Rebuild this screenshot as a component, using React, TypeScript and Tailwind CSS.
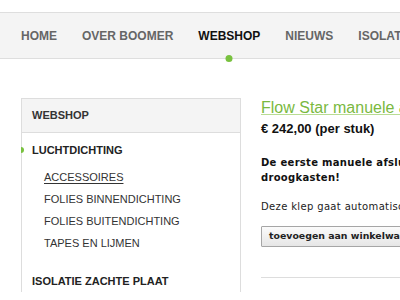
import React from "react";

const navItems = ["HOME", "OVER BOOMER", "WEBSHOP", "NIEUWS", "ISOLATIE", "CONTACT"];

export default function App() {
  return (
    <div className="w-[400px] h-[300px] overflow-hidden bg-white relative" style={{ fontFamily: '"Liberation Sans", Arial, sans-serif' }}>
      <div className="h-[12px]" />
      <nav className="h-[47px] border-y border-[#dedede] bg-[#f4f4f4] flex items-center gap-[25px] pl-[21px] whitespace-nowrap">
        {navItems.map((item) => (
          <div key={item} className="relative h-full flex items-center">
            <span className={`text-[12px] font-bold ${item === "WEBSHOP" ? "text-[#111]" : "text-[#666]"}`}>{item}</span>
            {item === "WEBSHOP" && (
              <span className="absolute left-1/2 bottom-[-4px] -translate-x-1/2 w-[7px] h-[7px] rounded-full bg-[#78c13e]" />
            )}
          </div>
        ))}
      </nav>
      <div className="flex pl-[21px] pt-[39px] gap-[20px]">
        <aside className="w-[220px] shrink-0 border-x border-t border-[#dddddd] relative">
          <div className="h-[34px] bg-[#f4f4f4] border-b border-[#dddddd] flex items-center pl-[10px] text-[11px] font-bold text-[#333]">
            WEBSHOP
          </div>
          <div className="pt-[6px] pl-[10px] text-[11px] text-[#222]">
            <div className="h-[22px] flex items-center font-bold relative">
              <span className="absolute left-[-11px] top-[8px] w-[3px] h-[6px] rounded-r-full bg-[#78c13e]" />
              LUCHTDICHTING
            </div>
            <div className="pt-[5px] pl-[12px] text-[#333]">
              <div className="h-[22px] flex items-center"><span className="underline underline-offset-2">ACCESSOIRES</span></div>
              <div className="h-[22px] flex items-center">FOLIES BINNENDICHTING</div>
              <div className="h-[22px] flex items-center">FOLIES BUITENDICHTING</div>
              <div className="h-[22px] flex items-center">TAPES EN LIJMEN</div>
            </div>
            <div className="mt-[16px] h-[22px] flex items-center font-bold text-[#222]">ISOLATIE ZACHTE PLAAT</div>
          </div>
        </aside>
        <main className="flex-1 min-w-0 whitespace-nowrap">
          <h1 className="text-[16px] leading-[18px] text-[#7ab93f] mt-[1px] underline decoration-[#b9dc93] underline-offset-[1px]">Flow Star manuele afsluitklep</h1>
          <div className="mt-[4px] text-[13px] leading-[16px] font-bold text-[#111]">€ 242,00 (per stuk)</div>
          <p className="mt-[18px] text-[10px] leading-[15px] font-bold text-[#111] tracking-[0.3px]" style={{ fontFamily: '"DejaVu Sans", Verdana, sans-serif' }}>
            De eerste manuele afsluitklep voor<br />droogkasten!
          </p>
          <p className="mt-[14px] text-[10px] leading-[15px] text-[#222] tracking-[0.35px]" style={{ fontFamily: '"DejaVu Sans", Verdana, sans-serif' }}>
            Deze klep gaat automatisch open
          </p>
          <button className="mt-[12px] h-[21px] px-[7px] border border-[#a6a6a6] bg-gradient-to-b from-[#fbfbfb] to-[#e6e6e6] text-[9.4px] font-bold text-[#222] rounded-[1px]" style={{ fontFamily: '"DejaVu Sans", Verdana, sans-serif' }}>
            toevoegen aan winkelwagen
          </button>
          <div className="mt-[30px] border-t border-[#dddddd] w-[200px]" />
        </main>
      </div>
    </div>
  );
}
